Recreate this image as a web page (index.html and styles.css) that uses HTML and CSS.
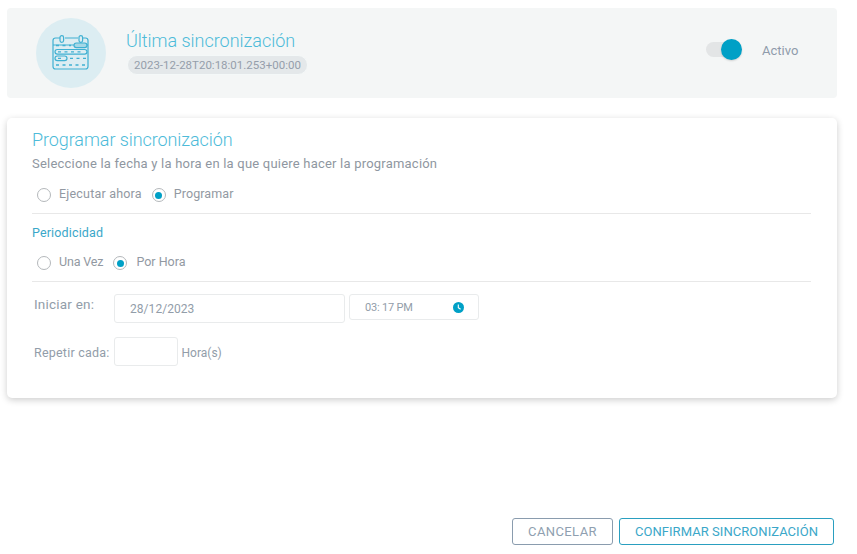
FILE: index.html
```html
<!DOCTYPE html>
<html lang="es">
<head>
<meta charset="utf-8">
<title>Programar sincronización</title>
<link rel="stylesheet" href="styles.css">
</head>
<body>
<main class="page">
  <section class="status">
    <div class="status-icon">
      <svg width="38" height="36" viewBox="0 0 38 36" fill="none" stroke="#3fb0d2" stroke-width="1.2">
        <path d="M8 3H3.500Q1 3 1 5.500V31.500Q1 34 3.500 34H33.500Q36 34 36 31.500V5.500Q36 3 33.500 3H31M13 3H26"/>
        <rect x="8" y="0.600" width="3.600" height="6.800" rx="1.800"/>
        <rect x="27" y="0.600" width="3.600" height="6.800" rx="1.800"/>
        <path d="M1 10H36" stroke-width="1"/>
        <rect x="22" y="8" width="13" height="4.600" rx="2.300" fill="#a5d8e6"/>
        <rect x="3" y="14.500" width="32" height="4.600" rx="2.300"/>
        <rect x="3" y="21" width="12" height="4.600" rx="2.300"/>
        <path d="M4 10.500H19M6 16.800H32M6 23.300H12M18 23.300H34M4 30H34" stroke-dasharray="3 3.500" stroke-width="1.300"/>
      </svg>
    </div>
    <div class="status-text">
      <h1 class="status-title">Última sincronización</h1>
      <span class="status-pill">2023-12-28T20:18:01.253+00:00</span>
    </div>
    <div class="switch"><span class="switch-track"></span><span class="switch-thumb"></span></div>
    <span class="switch-label">Activo</span>
  </section>

  <section class="card">
    <h2 class="card-title">Programar sincronización</h2>
    <p class="card-help">Seleccione la fecha y la hora en la que quiere hacer la programación</p>
    <div class="radios radios-first">
      <span class="radio"></span><span class="radio-label">Ejecutar ahora</span>
      <span class="radio radio-on"></span><span class="radio-label">Programar</span>
    </div>
    <hr class="rule">
    <h3 class="section-label">Periodicidad</h3>
    <div class="radios radios-second">
      <span class="radio"></span><span class="radio-label">Una Vez</span>
      <span class="radio radio-on"></span><span class="radio-label">Por Hora</span>
    </div>
    <hr class="rule">
    <div class="start-row">
      <span class="field-label field-label-start">Iniciar en:</span>
      <div class="input input-date">28/12/2023</div>
      <div class="input input-time">
        <span>03: 17 PM</span>
        <svg width="11" height="11" viewBox="0 0 11 11"><circle cx="5.500" cy="5.500" r="5.500" fill="#00a0c6"/><path d="M5.300 2.500V5.600L7.600 7.300" fill="none" stroke="#fff" stroke-width="1.100"/></svg>
      </div>
    </div>
    <div class="repeat-row">
      <span class="field-label field-label-repeat">Repetir cada:</span>
      <div class="input input-hours"></div>
      <span class="field-label field-label-unit">Hora(s)</span>
    </div>
  </section>

  <footer class="actions">
    <button class="btn btn-cancel" type="button">CANCELAR</button>
    <button class="btn btn-confirm" type="button">CONFIRMAR SINCRONIZACIÓN</button>
  </footer>
</main>
</body>
</html>
```
FILE: styles.css
```css
* { box-sizing: border-box; }
html, body { margin: 0; height: 100%; background: #fff; }
body { font-family: "Roboto", "Liberation Sans", sans-serif; color: #949ca5; overflow: hidden; }
.page { width: 857px; height: 554px; padding: 8px 20px 0 7px; display: flex; flex-direction: column; }

.status { height: 90px; background: #f4f6f6; border-radius: 4px; display: flex; align-items: center; padding-left: 29px; }
.status-icon { width: 70px; height: 70px; border-radius: 50%; background: #dcedf2; display: flex; align-items: center; justify-content: center; flex: none; }
.status-text { margin-left: 20px; width: 580px; display: flex; flex-direction: column; align-items: flex-start; position: relative; top: -1px; }
.status-title { margin: 0 0 3px; font-size: 18px; line-height: 22px; font-weight: 300; color: #4dbbd9; letter-spacing: -.03px; }
.status-pill { margin-left: 1px; height: 20px; line-height: 18px; padding: 0 6px; border-radius: 10px; background: #e4e8ea; border: 1px solid #f4f8f8; font-size: 11.500px; letter-spacing: 0; color: #959eab; }
.switch { position: relative; width: 37px; height: 22px; flex: none; top: -3px; }
.switch-track { position: absolute; left: 0; top: 3px; width: 32px; height: 15px; border-radius: 8px; background: #e3e5e6; }
.switch-thumb { position: absolute; left: 15px; top: 0; width: 21px; height: 21px; border-radius: 50%; background: #00a0c6; box-shadow: 0 1px 2px rgba(0,0,0,.15); }
.switch-label { margin-left: 19px; font-size: 13px; font-weight: 400; color: #8f9bab; letter-spacing: 0; position: relative; top: -3px; }

.card { margin-top: 20px; height: 280px; background: #fff; border-radius: 5px; box-shadow: 0 2px 7px rgba(0,0,0,.2); padding: 11px 26px 0 25px; }
.card-title { margin: 0; font-size: 18px; line-height: 22px; font-weight: 300; color: #4dbbd9; letter-spacing: -.08px; }
.card-help { margin: 5px 0 0; font-size: 13px; line-height: 16px; color: #8f97a1; letter-spacing: .21px; }
.radios { display: flex; align-items: center; padding-left: 5px; height: 18px; }
.radios-first { margin-top: 14px; }
.radios-second { margin-top: 13px; }
.radio { width: 14px; height: 14px; border-radius: 50%; border: 1px solid #b4b8bb; background: #fff; flex: none; display: flex; align-items: center; justify-content: center; }
.radio-on::after { content: ""; width: 7px; height: 7px; border-radius: 50%; background: #00a0c6; }
.radio-label { margin: 0 10px 0 8px; font-size: 12.500px; line-height: 16px; color: #9299a2; letter-spacing: .1px; position: relative; top: -1px; }
.radios-first .radio-label { margin-right: 10px; letter-spacing: .2px; }
.radios-first .radio-on + .radio-label { letter-spacing: .08px; }
.radios-second .radio-label { letter-spacing: -.15px; }
.radios-second .radio-on + .radio-label { margin-left: 9px; letter-spacing: 0; }
.rule { margin: 0; border: 0; border-top: 1px solid #e8e8e8; }
.radios-first + .rule { margin-top: 9px; }
.radios-second + .rule { margin-top: 9px; }
.section-label { margin: 11px 0 0; font-size: 12.500px; line-height: 16px; font-weight: 400; color: #3ba7c9; letter-spacing: .15px; }

.start-row { display: flex; align-items: flex-start; margin-top: 12px; padding-left: 2px; }
.field-label { font-size: 12.500px; line-height: 16px; color: #929da9; letter-spacing: .2px; }
.field-label-start { width: 80px; font-size: 13.500px; margin-top: 2px; }
.field-label-repeat { letter-spacing: .22px; margin-top: 2px; }
.field-label-unit { letter-spacing: 0; font-size: 12px; margin-top: 2px; }
.input { border: 1px solid #e9ebec; border-radius: 3px; background: #fff; font-size: 12px; color: #929da9; letter-spacing: .05px; }
.input-date { width: 231px; height: 29px; line-height: 28px; padding-left: 15px; }
.input-time { width: 130px; height: 26px; margin-left: 4px; padding: 0 14px 0 15px; display: flex; align-items: center; justify-content: space-between; font-size: 11px; letter-spacing: -.2px; }
.repeat-row { display: flex; align-items: center; margin-top: 14px; padding-left: 2px; }
.input-hours { width: 64px; height: 29px; margin: 0 4px 0 4px; }

.actions { margin-top: 120px; padding-right: 3px; display: flex; justify-content: flex-end; gap: 6px; }
.btn { height: 27px; padding: 0; background: #fff; border-radius: 3px; font: 400 13px/25px "Roboto", "Liberation Sans", sans-serif; letter-spacing: .05px; }
.btn-cancel { width: 101px; border: 1px solid #8a9cae; color: #8f9fb0; letter-spacing: .4px; }
.btn-confirm { width: 215px; border: 1px solid #2a9fc0; color: #3ba7c9; }
```
